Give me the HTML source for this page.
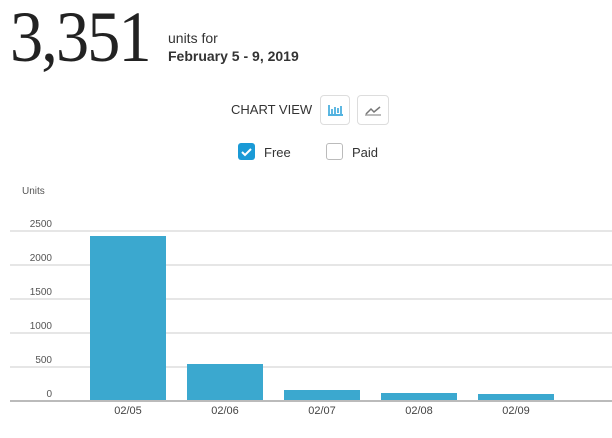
<!DOCTYPE html>
<html><head><style>
body{margin:0;width:612px;height:438px;background:#fff;font-family:"Liberation Sans",sans-serif;color:#222;position:relative;overflow:hidden}
.a{position:absolute}
.g{position:absolute;left:10px;width:602px;height:2px;background:#e6e6e6}
.l{position:absolute;width:44px;text-align:right;left:8px;font-size:10px;color:#555}
.b{position:absolute;width:76px;background:#3ba8cf}
.x{position:absolute;width:76px;text-align:center;font-size:11px;color:#444;top:405px}
</style></head><body>
<div class="a" style="left:10px;top:-4px;font-family:'Liberation Serif',serif;font-size:72px;color:#222;letter-spacing:-2px;transform:scaleX(0.92);transform-origin:0 0">3,351</div>
<div class="a" style="left:168px;top:30px;font-size:14px;color:#333">units for</div>
<div class="a" style="left:168px;top:48px;font-size:14px;font-weight:bold;color:#333">February 5 - 9, 2019</div>
<div class="a" style="left:231px;top:102px;font-size:13px;color:#333">CHART VIEW</div>
<div class="a" style="left:320px;top:95px;width:30px;height:30px;border:1px solid #ddd;border-radius:4px;box-sizing:border-box">
<svg width="28" height="28" style="position:absolute;left:0;top:0"><path d="M8 9v9M11 13v5M14 11v7M17 12v5M20 10v8M7 19h15" stroke="#1a9ad6" stroke-width="1.4" fill="none"/></svg></div>
<div class="a" style="left:357px;top:95px;width:32px;height:30px;border:1px solid #ddd;border-radius:4px;box-sizing:border-box">
<svg width="30" height="30" style="position:absolute;left:0;top:0"><path d="M8 18l5-5 3 3 6-5" stroke="#777" stroke-width="1.5" fill="none"/><path d="M7 19h16" stroke="#777"/></svg></div>
<div class="a" style="left:238px;top:143px;width:17px;height:17px;background:#1a9ad6;border-radius:3px">
<svg width="17" height="17"><path d="M4 9l3 3 6-6" stroke="#fff" stroke-width="2" fill="none"/></svg></div>
<div class="a" style="left:264px;top:145px;font-size:13px;color:#333">Free</div>
<div class="a" style="left:326px;top:143px;width:17px;height:17px;border:1px solid #bbb;border-radius:3px;box-sizing:border-box"></div>
<div class="a" style="left:352px;top:145px;font-size:13px;color:#333">Paid</div>
<div class="a" style="left:22px;top:186px;font-size:10px;color:#555">Units</div>
<div class="g" style="top:230px"></div><div class="l" style="top:219px">2500</div>
<div class="g" style="top:264px"></div><div class="l" style="top:253px">2000</div>
<div class="g" style="top:298px"></div><div class="l" style="top:287px">1500</div>
<div class="g" style="top:332px"></div><div class="l" style="top:321px">1000</div>
<div class="g" style="top:366px"></div><div class="l" style="top:355px">500</div>
<div class="l" style="top:389px">0</div>
<div class="b" style="left:90px;top:236px;height:165px"></div>
<div class="b" style="left:187px;top:364px;height:37px"></div>
<div class="b" style="left:284px;top:390px;height:11px"></div>
<div class="b" style="left:381px;top:393px;height:8px"></div>
<div class="b" style="left:478px;top:394px;height:7px"></div>
<div class="a" style="left:10px;top:400px;width:602px;height:2px;background:#bbb"></div>
<div class="x" style="left:90px">02/05</div><div class="x" style="left:187px">02/06</div><div class="x" style="left:284px">02/07</div><div class="x" style="left:381px">02/08</div><div class="x" style="left:478px">02/09</div>
</body></html>
